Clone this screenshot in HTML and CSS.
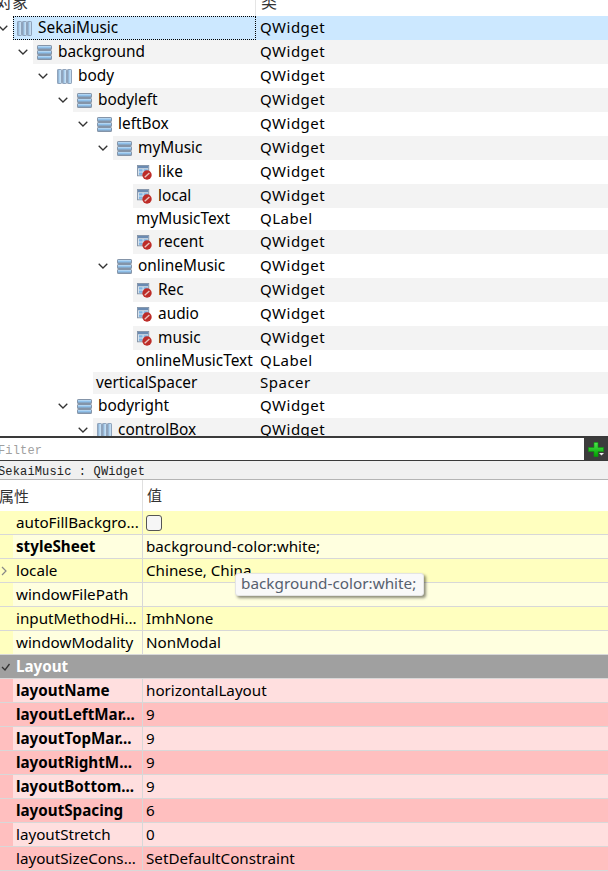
FILE: index.html
```html
<!DOCTYPE html>
<html lang="zh">
<head>
<meta charset="utf-8">
<title>Qt Designer</title>
<link rel="stylesheet" href="styles.css">
</head>
<body>
<svg class="defs" width="0" height="0" aria-hidden="true">
  <defs>
    <linearGradient id="bar" x1="0" y1="0" x2="0" y2="1"><stop offset="0" stop-color="#d4e8f8"/><stop offset="0.5" stop-color="#8fc0ea"/><stop offset="1" stop-color="#7d8fa5"/></linearGradient>
    <linearGradient id="col" x1="0" y1="0" x2="1" y2="0"><stop offset="0" stop-color="#7f93ad"/><stop offset="0.45" stop-color="#a9d0f0"/><stop offset="1" stop-color="#dbe8f3"/></linearGradient>
    <linearGradient id="plus" x1="0" y1="0" x2="0" y2="1"><stop offset="0" stop-color="#4fe84f"/><stop offset="1" stop-color="#00a000"/></linearGradient>
    <symbol id="vlayout" viewBox="0 0 15 15">
      <rect x="0.5" y="0.5" width="14" height="4" rx="0.6" fill="url(#bar)" stroke="#8494a8"/>
      <rect x="0.5" y="5.5" width="14" height="4" rx="0.6" fill="url(#bar)" stroke="#8494a8"/>
      <rect x="0.5" y="10.5" width="14" height="4" rx="0.6" fill="url(#bar)" stroke="#8494a8"/>
    </symbol>
    <symbol id="hlayout" viewBox="0 0 15 15">
      <rect x="0.5" y="0.5" width="4" height="14" rx="0.6" fill="url(#col)" stroke="#8fa3bb"/>
      <rect x="5.5" y="0.5" width="4" height="14" rx="0.6" fill="url(#col)" stroke="#8fa3bb"/>
      <rect x="10.5" y="0.5" width="4" height="14" rx="0.6" fill="url(#col)" stroke="#8fa3bb"/>
    </symbol>
    <symbol id="broken" viewBox="0 0 16 16">
      <rect x="0.5" y="0.5" width="12" height="11" fill="#dfe7ef" stroke="#8494a8"/>
      <rect x="1" y="1" width="11" height="2.5" fill="#6b8bb2"/>
      <rect x="2" y="4.5" width="4" height="2.5" fill="#7fb4e2"/>
      <rect x="7" y="4.5" width="4.5" height="2.5" fill="#7fb4e2"/>
      <rect x="2" y="8" width="4" height="2.5" fill="#7fb4e2"/>
      <circle cx="10.7" cy="10.7" r="5" fill="#bd2c28"/>
      <path d="M8.2 13 L13.2 8.6" stroke="#e9c4bf" stroke-width="1.5" fill="none"/>
    </symbol>
    <symbol id="chev" viewBox="0 0 10 6">
      <path d="M0.7 0.7 L5 5 L9.3 0.7" fill="none" stroke="#333" stroke-width="1.3"/>
    </symbol>
  </defs>
</svg>

<main class="page">
  <section class="tree">
    <div class="tree-head"><span class="th-name"><span class="th-text">对象</span></span><span class="th-class"><span class="th-text">类</span></span></div>

    <div class="row sel"><div class="ind i0"><svg class="chev"><use href="#chev"/></svg></div><div class="cells"><div class="name focus"><svg class="ico"><use href="#hlayout"/></svg>SekaiMusic</div><div class="cls">QWidget</div></div></div>
    <div class="row alt"><div class="ind i1"><svg class="chev"><use href="#chev"/></svg></div><div class="cells"><div class="name"><svg class="ico"><use href="#vlayout"/></svg>background</div><div class="cls">QWidget</div></div></div>
    <div class="row"><div class="ind i2"><svg class="chev"><use href="#chev"/></svg></div><div class="cells"><div class="name"><svg class="ico"><use href="#hlayout"/></svg>body</div><div class="cls">QWidget</div></div></div>
    <div class="row alt"><div class="ind i3"><svg class="chev"><use href="#chev"/></svg></div><div class="cells"><div class="name"><svg class="ico"><use href="#vlayout"/></svg>bodyleft</div><div class="cls">QWidget</div></div></div>
    <div class="row"><div class="ind i4"><svg class="chev"><use href="#chev"/></svg></div><div class="cells"><div class="name"><svg class="ico"><use href="#vlayout"/></svg>leftBox</div><div class="cls">QWidget</div></div></div>
    <div class="row alt"><div class="ind i5"><svg class="chev"><use href="#chev"/></svg></div><div class="cells"><div class="name"><svg class="ico"><use href="#vlayout"/></svg>myMusic</div><div class="cls">QWidget</div></div></div>
    <div class="row"><div class="ind i6"></div><div class="cells"><div class="name"><svg class="ico"><use href="#broken"/></svg>like</div><div class="cls">QWidget</div></div></div>
    <div class="row alt"><div class="ind i6"></div><div class="cells"><div class="name"><svg class="ico"><use href="#broken"/></svg>local</div><div class="cls">QWidget</div></div></div>
    <div class="row short"><div class="ind i6"></div><div class="cells"><div class="name plain">myMusicText</div><div class="cls">QLabel</div></div></div>
    <div class="row alt"><div class="ind i6"></div><div class="cells"><div class="name"><svg class="ico"><use href="#broken"/></svg>recent</div><div class="cls">QWidget</div></div></div>
    <div class="row"><div class="ind i5"><svg class="chev"><use href="#chev"/></svg></div><div class="cells"><div class="name"><svg class="ico"><use href="#vlayout"/></svg>onlineMusic</div><div class="cls">QWidget</div></div></div>
    <div class="row alt"><div class="ind i6"></div><div class="cells"><div class="name"><svg class="ico"><use href="#broken"/></svg>Rec</div><div class="cls">QWidget</div></div></div>
    <div class="row"><div class="ind i6"></div><div class="cells"><div class="name"><svg class="ico"><use href="#broken"/></svg>audio</div><div class="cls">QWidget</div></div></div>
    <div class="row alt"><div class="ind i6"></div><div class="cells"><div class="name"><svg class="ico"><use href="#broken"/></svg>music</div><div class="cls">QWidget</div></div></div>
    <div class="row short"><div class="ind i6"></div><div class="cells"><div class="name plain">onlineMusicText</div><div class="cls">QLabel</div></div></div>
    <div class="row short alt"><div class="ind i4"></div><div class="cells"><div class="name plain spacer">verticalSpacer</div><div class="cls">Spacer</div></div></div>
    <div class="row"><div class="ind i3"><svg class="chev"><use href="#chev"/></svg></div><div class="cells"><div class="name"><svg class="ico"><use href="#vlayout"/></svg>bodyright</div><div class="cls">QWidget</div></div></div>
    <div class="row alt"><div class="ind i4"><svg class="chev"><use href="#chev"/></svg></div><div class="cells"><div class="name"><svg class="ico"><use href="#hlayout"/></svg>controlBox</div><div class="cls">QWidget</div></div></div>
  </section>

  <section class="filter">
    <div class="filter-field">Filter</div>
    <div class="filter-btn">
      <svg class="plus" viewBox="0 0 16 15" width="16" height="15"><path d="M6 0.5 H10 V5.5 H15.5 V9.5 H10 V14.5 H6 V9.5 H0.5 V5.5 H6 Z" fill="url(#plus)" stroke="#0a9a0a" stroke-width="0.6"/><path d="M11 11 H16 L13.5 13.5 Z" fill="#e8e8e8"/></svg>
    </div>
  </section>
  <div class="objbar">SekaiMusic : QWidget</div>

  <section class="props">
    <div class="props-head"><div class="ph-key">属性</div><div class="ph-val">值</div></div>

    <div class="prop yd"><div class="key">autoFillBackgro...</div><div class="val"><span class="check"></span></div></div>
    <div class="prop yl"><div class="key strong">styleSheet</div><div class="val">background-color:white;</div></div>
    <div class="prop yd"><div class="key"><svg class="exp" viewBox="0 0 6 10"><path d="M1 1 L5 5 L1 9" fill="none" stroke="#888" stroke-width="1.2"/></svg>locale</div><div class="val">Chinese, China</div></div>
    <div class="prop yl"><div class="key">windowFilePath</div><div class="val"></div></div>
    <div class="prop yd"><div class="key">inputMethodHi...</div><div class="val">ImhNone</div></div>
    <div class="prop yl"><div class="key">windowModality</div><div class="val">NonModal</div></div>
    <div class="group"><svg class="gchev" viewBox="0 0 10 8"><path d="M1 4 L4 7 L8.5 1" fill="none" stroke="#333" stroke-width="1.3"/></svg>Layout</div>
    <div class="prop rl"><div class="key strong">layoutName</div><div class="val">horizontalLayout</div></div>
    <div class="prop rd"><div class="key strong">layoutLeftMar...</div><div class="val">9</div></div>
    <div class="prop rl"><div class="key strong">layoutTopMar...</div><div class="val">9</div></div>
    <div class="prop rd"><div class="key strong">layoutRightM...</div><div class="val">9</div></div>
    <div class="prop rl"><div class="key strong">layoutBottom...</div><div class="val">9</div></div>
    <div class="prop rd"><div class="key strong">layoutSpacing</div><div class="val">6</div></div>
    <div class="prop rl"><div class="key">layoutStretch</div><div class="val">0</div></div>
    <div class="prop rd"><div class="key">layoutSizeCons...</div><div class="val">SetDefaultConstraint</div></div>

    <div class="tooltip">background-color:white;</div>
  </section>
</main>
</body>
</html>
```

FILE: styles.css
```css
* { box-sizing: border-box; }
html, body { margin: 0; padding: 0; background: #fff; }
.defs { position: absolute; }
.page {
  width: 608px;
  height: 871px;
  overflow: hidden;
  display: flex;
  flex-direction: column;
  font-family: "Noto Sans", "Noto Sans CJK SC", sans-serif;
  font-size: 15px;
  color: #000;
}

/* object tree */
.tree { height: 436px; overflow: hidden; flex: none; }
.tree-head { height: 16px; display: flex; overflow: hidden; color: #333; font-size: 16px; }
.th-name { width: 256px; border-right: 1px solid #e5e5e5; overflow: hidden; }
.th-class { padding-left: 5px; overflow: hidden; }
.th-text { display: block; line-height: 4px; margin-left: -4px; }
.th-class .th-text { margin-left: 0; }

.row { height: 24px; display: flex; align-items: stretch; }
.row.short { height: 22px; }
.ind { flex: none; display: flex; align-items: center; justify-content: flex-end; padding-right: 5px; }
.i0 { width: 13px; padding-right: 0; overflow: hidden; }
.i1 { width: 33px; }
.i2 { width: 53px; }
.i3 { width: 73px; }
.i4 { width: 93px; }
.i5 { width: 113px; }
.i6 { width: 133px; }
.chev { width: 10px; height: 6px; flex: none; }
.i0 .chev { margin-right: 5px; margin-left: -2px; }
.cells { flex: 1; display: flex; align-items: center; min-width: 0; height: 100%; padding-bottom: 2px; }
.alt .cells { background: #f3f3f3; }
.sel .cells { background: #cce8ff; }
.name { flex: 1; min-width: 0; height: 100%; display: flex; align-items: center; white-space: nowrap; padding-left: 4px; font-size: 15.4px; }
.name.plain { padding-left: 3px; }
.name.spacer { padding-left: 3px; }
.focus { outline: 1px dotted #000; outline-offset: -1px; height: 24px; margin-bottom: -2px; padding-bottom: 2px; }
.ico { width: 15px; height: 15px; flex: none; margin-right: 6px; margin-top: 2px; }
.cls { flex: none; width: 352px; padding-left: 4px; white-space: nowrap; letter-spacing: 0.5px; }

/* filter */
.filter { height: 25px; flex: none; display: flex; border-top: 2px solid #3a3a3a; border-bottom: 1px solid #3a3a3a; background: #3c3c3c; }
.filter-field { flex: 1; background: #fff; font-family: "Liberation Mono", monospace; font-size: 12px; letter-spacing: 0.15px; line-height: 27px; color: #a0a0a0; text-indent: -2px; overflow: hidden; }
.filter-btn { width: 24px; flex: none; display: flex; align-items: center; justify-content: center; }
.plus { display: block; }
.objbar { height: 19px; flex: none; background: #f0f0f0; border-bottom: 1px solid #b4b4b4; font-family: "Liberation Mono", monospace; font-size: 12px; letter-spacing: 0.15px; line-height: 23px; text-indent: -2px; color: #222; white-space: nowrap; overflow: hidden; }

/* property editor */
.props { position: relative; flex: 1; min-height: 0; }
.props-head { height: 31px; display: flex; align-items: center; background: #fff; color: #333; }
.ph-key { width: 143px; height: 100%; border-right: 1px solid #e0e0e0; line-height: 33px; text-indent: -1px; overflow: hidden; }
.ph-val { padding-left: 4px; line-height: 33px; }

.prop { height: 24px; display: flex; border-bottom: 1px solid #d8d8d8; }
.key { width: 143px; flex: none; position: relative; padding-left: 16px; line-height: 23px; white-space: nowrap; overflow: hidden; border-right: 1px solid #d8d8d8; font-size: 15.2px; }
.val { flex: 1; padding-left: 3px; line-height: 23px; white-space: nowrap; display: flex; align-items: center; font-size: 15.2px; }
.key.strong { font-weight: 700; }
.yd { background: #ffffbf; }
.yl { background: #ffffdf; }
.rd { background: #ffbfbf; }
.rl { background: #ffdfdf; }
.yl .key { background: linear-gradient(to right, #ffffbf 13px, #ffffdf 13px); }
.rl .key { background: linear-gradient(to right, #ffbfbf 13px, #ffdfdf 13px); }
.exp { position: absolute; left: 1px; top: 7px; width: 6px; height: 10px; }
.check { display: block; width: 16px; height: 16px; border: 1px solid #555; border-radius: 3px; background: #f6f6f6; }
.group { height: 24px; background: #a0a0a0; color: #fff; font-weight: 700; padding-left: 16px; line-height: 22px; position: relative; border-bottom: 1px solid #d8d8d8; font-size: 15.2px; }
.gchev { position: absolute; left: 1px; top: 8px; width: 10px; height: 8px; }

.tooltip {
  position: absolute;
  left: 235px;
  top: 93px;
  height: 23px;
  width: 189px;
  padding-left: 5px;
  background: #f9f9f9;
  border: 1px solid #e4e4e4;
  border-radius: 3px;
  box-shadow: 2px 2px 3px rgba(0,0,0,0.45);
  color: #56606e;
  font-size: 15.3px;
  line-height: 19px;
  white-space: nowrap;
}
```
